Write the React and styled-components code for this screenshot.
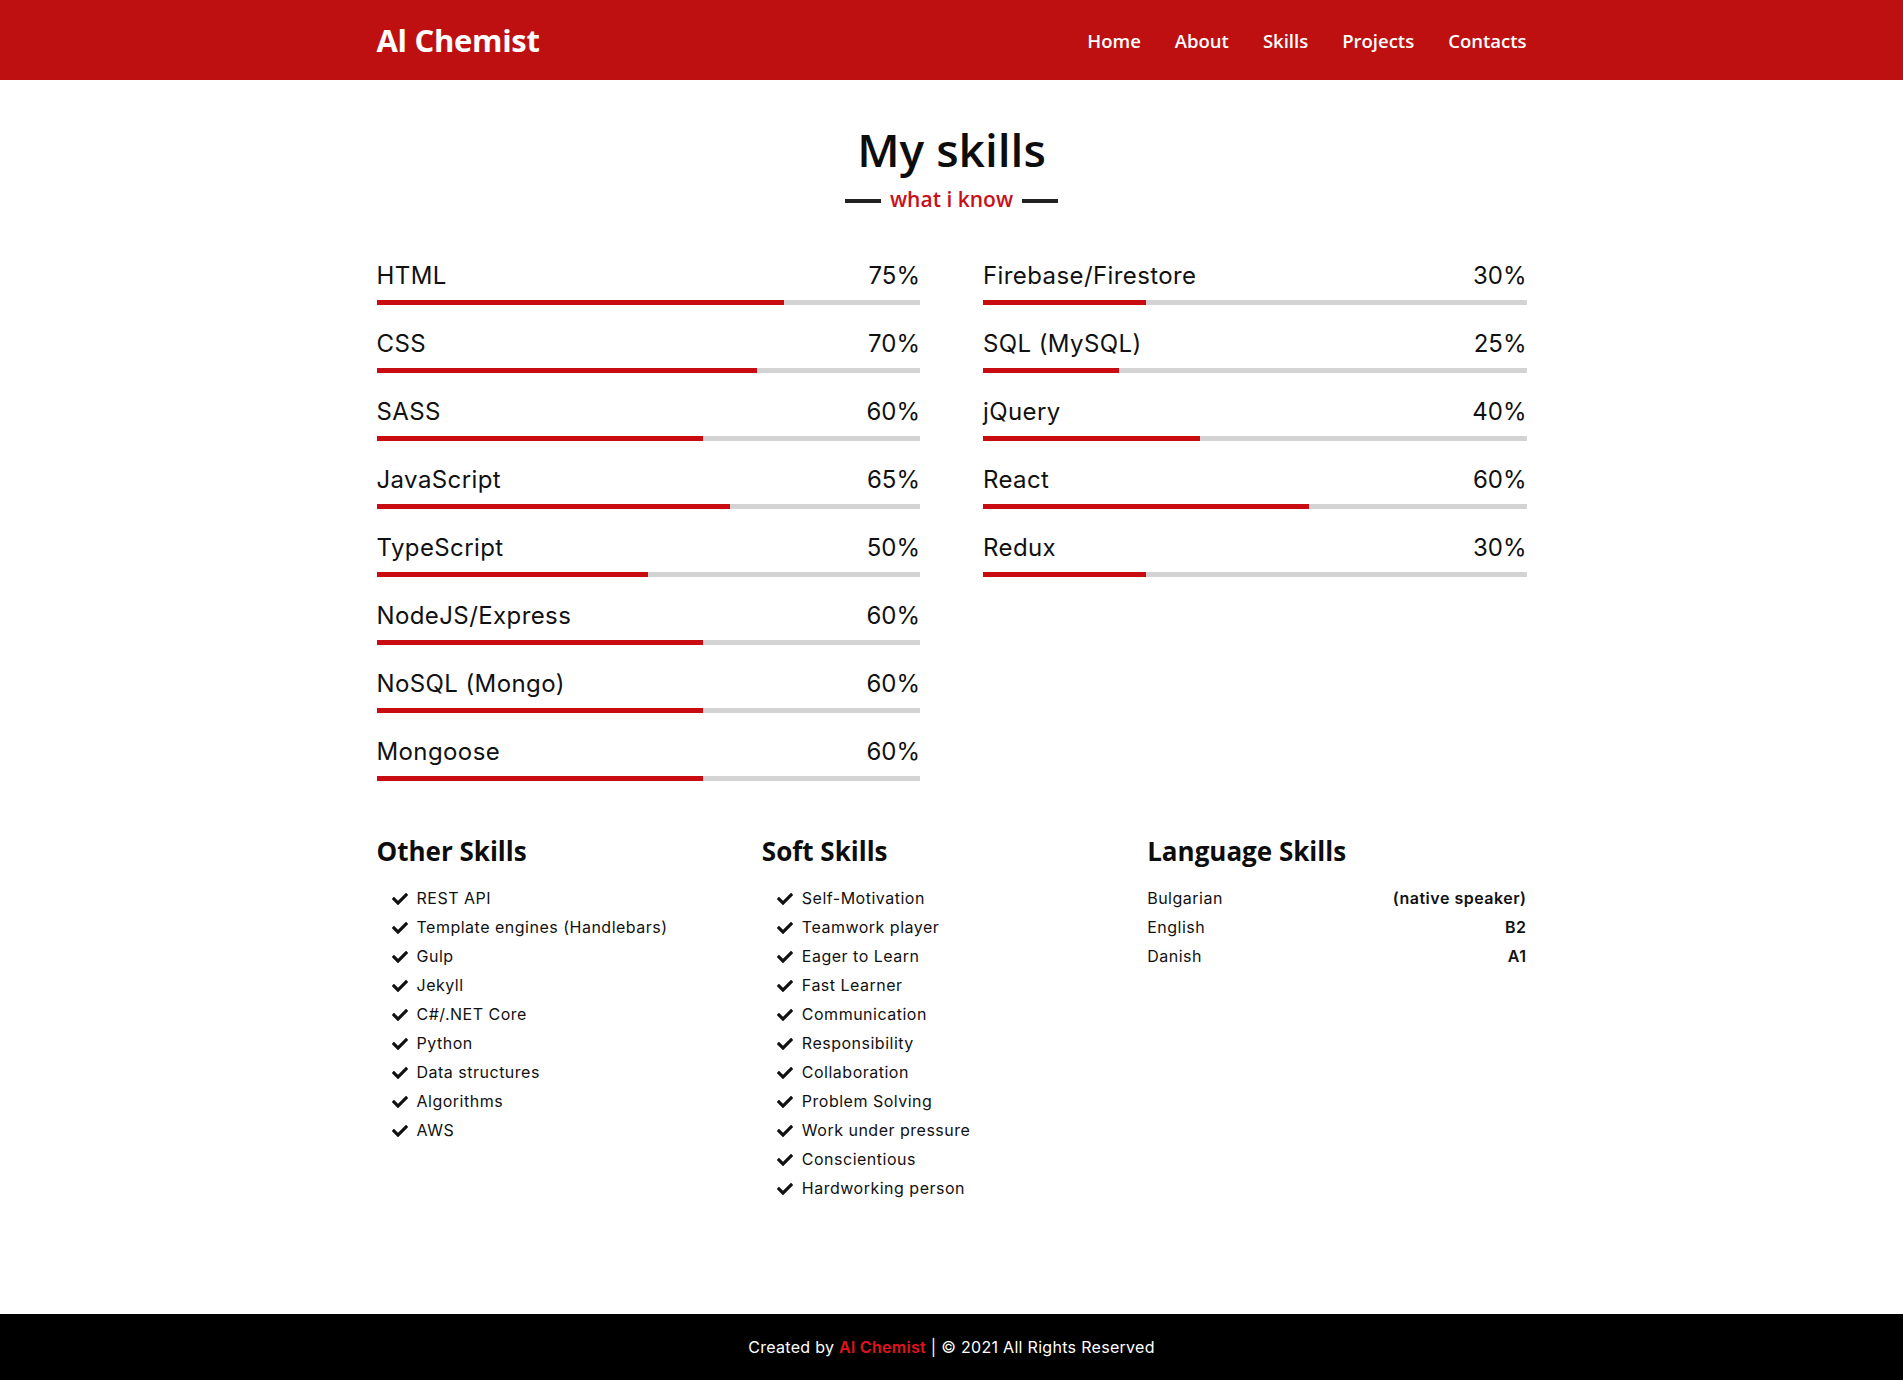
import styled, { createGlobalStyle } from "styled-components";
import { FaCheck } from "react-icons/fa";

const GlobalStyle = createGlobalStyle`
  * { box-sizing: border-box; }
  body {
    margin: 0;
    font-family: Inter, "Liberation Sans", sans-serif;
    color: #111;
    background: #fff;
  }
`;

const heading = `"Open Sans", "Noto Sans", "Liberation Sans", sans-serif`;

const Page = styled.div`
  min-height: 100vh;
  display: flex;
  flex-direction: column;
`;

const Header = styled.header`
  background: #be1010;
  height: 80px;
`;

const Inner = styled.div`
  max-width: 1200px;
  margin: 0 auto;
  padding: 0 25px;
`;

const HeaderInner = styled(Inner)`
  height: 100%;
  display: flex;
  align-items: center;
  justify-content: space-between;
`;

const Logo = styled.h1`
  margin: 0;
  color: #fff;
  font-family: ${heading};
  font-weight: 700;
  font-size: 31px;
  letter-spacing: -0.3px;
`;

const Nav = styled.nav`
  display: flex;
  gap: 34px;
`;

const NavLink = styled.a`
  color: #fff;
  font-family: ${heading};
  font-weight: 600;
  font-size: 18.5px;
  text-decoration: none;
`;

const Main = styled.main`
  flex: 1;
  padding: 40px 0 60px;
`;

const Title = styled.h2`
  margin: 0;
  text-align: center;
  font-family: ${heading};
  font-weight: 600;
  font-size: 46px;
  line-height: 58px;
  color: #0d0d0d;
`;

const Subtitle = styled.div`
  margin-top: 8px;
  display: flex;
  align-items: center;
  justify-content: center;
  gap: 9px;
  font-family: ${heading};
  font-weight: 600;
  font-size: 21px;
  line-height: 26px;
  color: #c8101a;

  &::before, &::after {
    content: "";
    width: 36px;
    height: 4px;
    background: #222;
    margin-top: 4px;
  }
`;

const BarsGrid = styled.div`
  margin-top: 44px;
  display: grid;
  grid-template-columns: 1fr 1fr;
  column-gap: 63px;
  align-items: start;
`;

const BarsColumn = styled.div`
  display: flex;
  flex-direction: column;
`;

const SkillRow = styled.div`
  margin-bottom: 19px;
`;

const SkillHead = styled.div`
  display: flex;
  justify-content: space-between;
  font-size: 24px;
  letter-spacing: 0.4px;
  line-height: 36px;
  padding-top: 2px;
  color: #111;
  margin-bottom: 6px;
`;

const Percent = styled.span`
  letter-spacing: 0;
`;

const Track = styled.div`
  height: 5px;
  background: #d3d3d3;
`;

const Fill = styled.div`
  height: 100%;
  background: #c80c12;
`;

const Lists = styled.div`
  margin-top: 35px;
  display: grid;
  grid-template-columns: repeat(3, 1fr);
  column-gap: 6px;
`;

const ListTitle = styled.h3`
  margin: 0 0 17px;
  font-family: ${heading};
  font-weight: 700;
  font-size: 26px;
  line-height: 32px;
  color: #0d0d0d;
`;

const CheckList = styled.ul`
  list-style: none;
  margin: 0;
  padding: 0 0 0 15px;
`;

const CheckItem = styled.li`
  display: flex;
  align-items: center;
  gap: 9px;
  font-size: 16px;
  letter-spacing: 0.5px;
  line-height: 29px;
  color: #111;

  svg {
    font-size: 16px;
    flex-shrink: 0;
  }
`;

const LangRow = styled.div`
  display: flex;
  justify-content: space-between;
  font-size: 16px;
  letter-spacing: 0.5px;
  line-height: 29px;
  color: #111;
`;

const LangLevel = styled.span`
  font-weight: 600;
`;

const Footer = styled.footer`
  background: #000;
  height: 66px;
  display: flex;
  align-items: center;
  justify-content: center;
  color: #fff;
  font-size: 16px;
  letter-spacing: 0.3px;
`;

const FooterName = styled.span`
  color: #e0141c;
  font-weight: 600;
`;

const leftSkills = [
  ["HTML", 75],
  ["CSS", 70],
  ["SASS", 60],
  ["JavaScript", 65],
  ["TypeScript", 50],
  ["NodeJS/Express", 60],
  ["NoSQL (Mongo)", 60],
  ["Mongoose", 60],
];

const rightSkills = [
  ["Firebase/Firestore", 30],
  ["SQL (MySQL)", 25],
  ["jQuery", 40],
  ["React", 60],
  ["Redux", 30],
];

const otherSkills = [
  "REST API",
  "Template engines (Handlebars)",
  "Gulp",
  "Jekyll",
  "C#/.NET Core",
  "Python",
  "Data structures",
  "Algorithms",
  "AWS",
];

const softSkills = [
  "Self-Motivation",
  "Teamwork player",
  "Eager to Learn",
  "Fast Learner",
  "Communication",
  "Responsibility",
  "Collaboration",
  "Problem Solving",
  "Work under pressure",
  "Conscientious",
  "Hardworking person",
];

const languages = [
  ["Bulgarian", "(native speaker)"],
  ["English", "B2"],
  ["Danish", "A1"],
];

const Bars = ({ items }) => (
  <BarsColumn>
    {items.map(([name, value]) => (
      <SkillRow key={name}>
        <SkillHead>
          <span>{name}</span>
          <Percent>{value}%</Percent>
        </SkillHead>
        <Track>
          <Fill style={{ width: `${value}%` }} />
        </Track>
      </SkillRow>
    ))}
  </BarsColumn>
);

const Checks = ({ items }) => (
  <CheckList>
    {items.map((item) => (
      <CheckItem key={item}>
        <FaCheck />
        {item}
      </CheckItem>
    ))}
  </CheckList>
);

const App = () => {
  return (
    <Page>
      <GlobalStyle />
      <Header>
        <HeaderInner>
          <Logo>Al Chemist</Logo>
          <Nav>
            <NavLink href="#">Home</NavLink>
            <NavLink href="#">About</NavLink>
            <NavLink href="#">Skills</NavLink>
            <NavLink href="#">Projects</NavLink>
            <NavLink href="#">Contacts</NavLink>
          </Nav>
        </HeaderInner>
      </Header>
      <Main>
        <Inner>
          <Title>My skills</Title>
          <Subtitle>what i know</Subtitle>
          <BarsGrid>
            <Bars items={leftSkills} />
            <Bars items={rightSkills} />
          </BarsGrid>
          <Lists>
            <div>
              <ListTitle>Other Skills</ListTitle>
              <Checks items={otherSkills} />
            </div>
            <div>
              <ListTitle>Soft Skills</ListTitle>
              <Checks items={softSkills} />
            </div>
            <div>
              <ListTitle>Language Skills</ListTitle>
              {languages.map(([lang, level]) => (
                <LangRow key={lang}>
                  <span>{lang}</span>
                  <LangLevel>{level}</LangLevel>
                </LangRow>
              ))}
            </div>
          </Lists>
        </Inner>
      </Main>
      <Footer>
        <span>
          Created by <FooterName>Al Chemist</FooterName> | © 2021 All Rights Reserved
        </span>
      </Footer>
    </Page>
  );
};

export default App;
